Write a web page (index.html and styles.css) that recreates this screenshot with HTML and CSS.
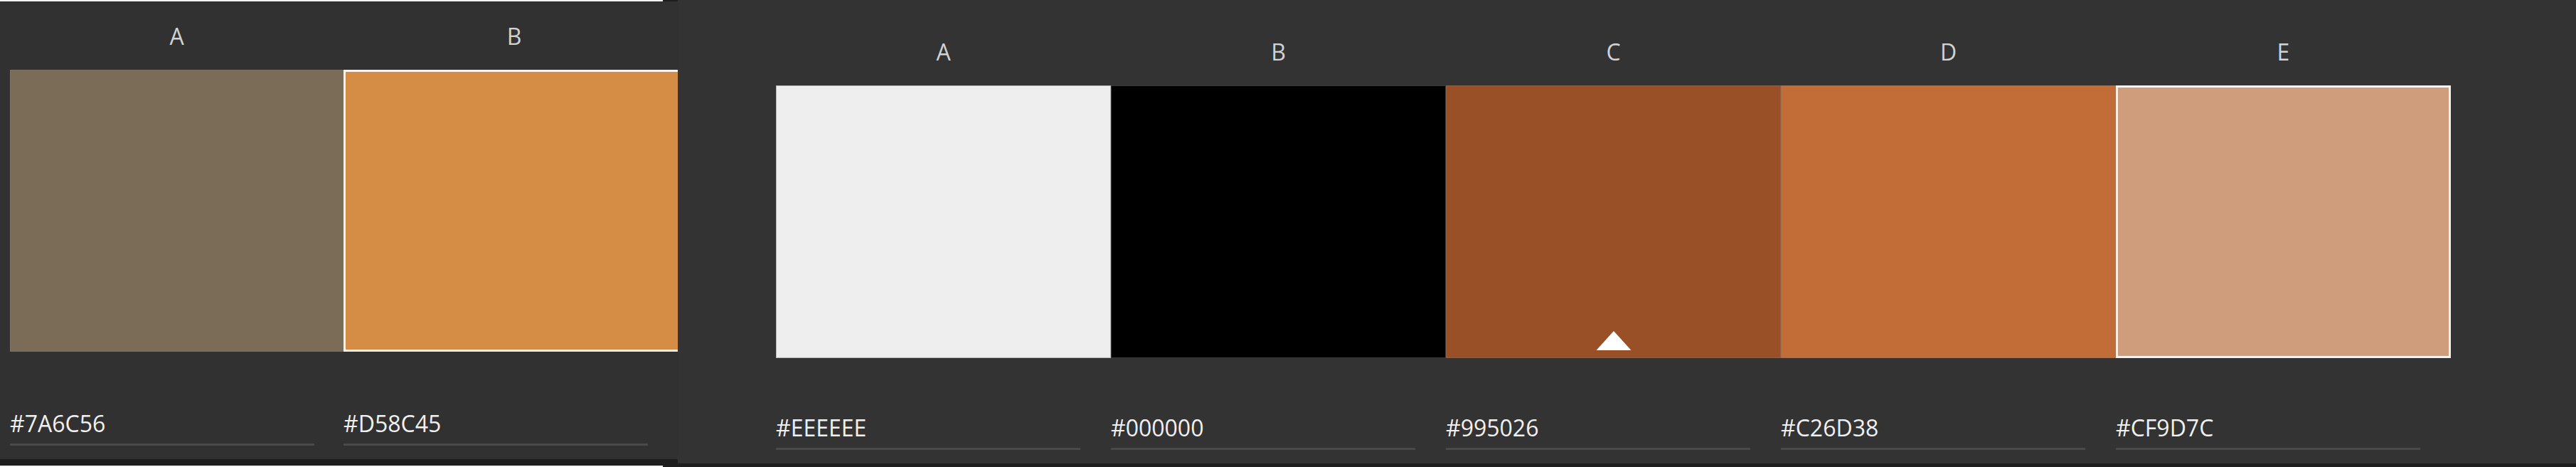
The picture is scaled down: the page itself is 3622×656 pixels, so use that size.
FILE: index.html
```html
<!DOCTYPE html>
<html>
<head>
<meta charset="utf-8">
<link rel="stylesheet" href="styles.css">
</head>
<body>
<div class="left-col">
  <div class="edge"></div>
  <section class="panel panel-left">
    <div class="palette palette-left">
      <div class="col">
        <div class="label">A</div>
        <div class="swatch" style="background:#7A6C56"></div>
        <div class="hex">#7A6C56</div>
      </div>
      <div class="col">
        <div class="label">B</div>
        <div class="swatch selected" style="background:#D58C45"></div>
        <div class="hex">#D58C45</div>
      </div>
    </div>
  </section>
  <div class="shade"></div>
  <div class="edge"></div>
</div>
<section class="panel panel-right">
  <div class="palette palette-right">
    <div class="col">
      <div class="label">A</div>
      <div class="swatch" style="background:#EEEEEE"></div>
      <div class="hex">#EEEEEE</div>
    </div>
    <div class="col">
      <div class="label">B</div>
      <div class="swatch" style="background:#000000"></div>
      <div class="hex">#000000</div>
    </div>
    <div class="col">
      <div class="label">C</div>
      <div class="swatch current" style="background:#995026">
        <svg class="marker" width="49" height="27" viewBox="0 0 49 27"><polygon points="24.5,0 49,27 0,27" fill="#ffffff"/></svg>
      </div>
      <div class="hex">#995026</div>
    </div>
    <div class="col">
      <div class="label">D</div>
      <div class="swatch" style="background:#C26D38"></div>
      <div class="hex">#C26D38</div>
    </div>
    <div class="col">
      <div class="label">E</div>
      <div class="swatch selected" style="background:#CF9D7C"></div>
      <div class="hex">#CF9D7C</div>
    </div>
  </div>
</section>
</body>
</html>
```

FILE: styles.css
```css
* { box-sizing: border-box; }

html, body {
  margin: 0;
  padding: 0;
}

body {
  width: 3622px;
  height: 656px;
  overflow: hidden;
  display: flex;
  align-items: flex-start;
  background: #1e1e1e;
  font-family: "Open Sans", "Noto Sans", sans-serif;
}

.left-col {
  width: 953px;
  height: 656px;
  display: flex;
  flex-direction: column;
  flex: none;
}

.edge {
  width: 932px;
  height: 2px;
  background: #f2f2f2;
}

.shade {
  height: 9px;
  background: #1e1e1e;
}

.panel {
  overflow: hidden;
}

.panel-left {
  height: 643px;
  background: #313131;
  padding: 34px 0 0 14px;
}

.panel-right {
  flex: 1;
  height: 651px;
  background: #333333;
  padding: 58px 0 0 138px;
}

.palette {
  display: grid;
}

.palette-left {
  grid-template-columns: 469px 480px;
}

.palette-right {
  grid-template-columns: repeat(5, 471px);
}

.col {
  display: flex;
  flex-direction: column;
}

.label {
  height: 30px;
  line-height: 30px;
  font-size: 32px;
  text-align: center;
  color: #d2d2d2;
}

.swatch {
  position: relative;
  margin-top: 32px;
  box-shadow: inset 0 0 0 1px rgba(120, 120, 120, 0.45);
}

.panel-left .swatch { height: 396px; }
.panel-right .swatch { height: 383px; }

.swatch.selected {
  box-shadow: none;
  border: 3px solid #f6f2ee;
}

.marker {
  position: absolute;
  left: 50%;
  bottom: 11px;
  transform: translateX(-50%);
  display: block;
}

.hex {
  width: 428px;
  font-size: 32px;
  line-height: 30px;
  color: #f0f0f0;
  padding-bottom: 13px;
  border-bottom: 3px solid #4a4a4a;
}

.panel-left .hex { margin-top: 86px; }
.panel-right .hex { margin-top: 83px; }
```
